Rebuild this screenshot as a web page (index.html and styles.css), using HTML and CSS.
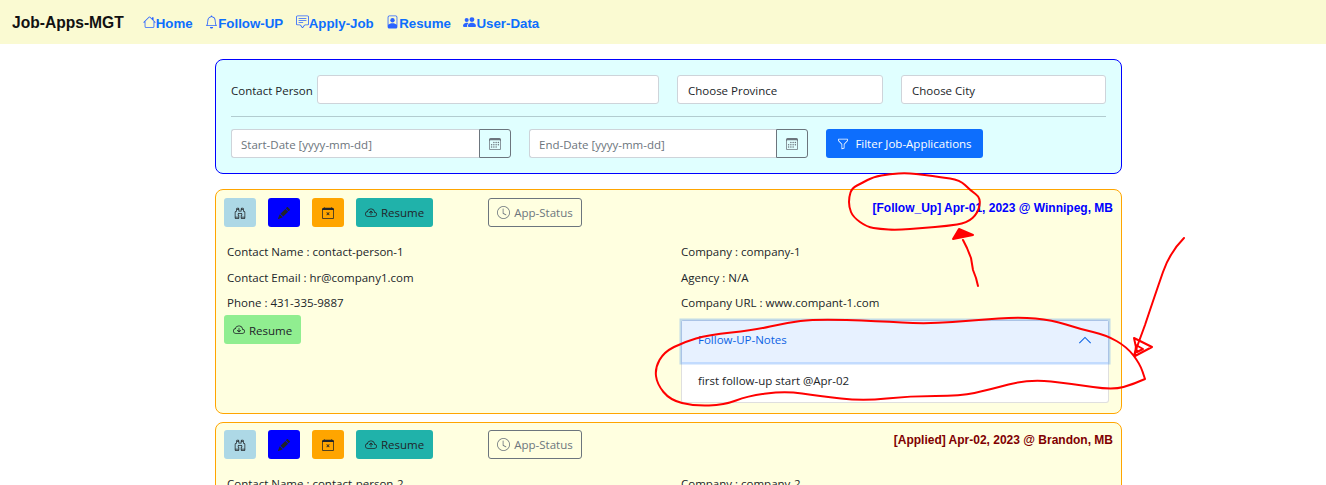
FILE: index.html
```html
<!DOCTYPE html>
<html lang="en">
<head>
  <meta charset="UTF-8">
  <title>Job-Apps-MGT</title>
  <meta name="viewport" content="width=device-width, initial-scale=1">
  <link rel="stylesheet" href="styles.css">
</head>
<body>
  <svg class="defs" width="0" height="0">
    <symbol id="i-house" viewBox="0 0 16 16"><path d="M8.707 1.5a1 1 0 0 0-1.414 0L.646 8.146a.5.5 0 0 0 .708.708L2 8.207V13.5A1.5 1.5 0 0 0 3.5 15h9a1.5 1.5 0 0 0 1.5-1.5V8.207l.646.647a.5.5 0 0 0 .708-.708L13 5.793V2.5a.5.5 0 0 0-.5-.5h-1a.5.5 0 0 0-.5.5v1.293L8.707 1.5ZM13 7.207V13.5a.5.5 0 0 1-.5.5h-9a.5.5 0 0 1-.5-.5V7.207l5-5 5 5Z"/></symbol>
    <symbol id="i-bell" viewBox="0 0 16 16"><path d="M8 16a2 2 0 0 0 2-2H6a2 2 0 0 0 2 2zM8 1.918l-.797.161A4.002 4.002 0 0 0 4 6c0 .628-.134 2.197-.459 3.742-.16.767-.376 1.566-.663 2.258h10.244c-.287-.692-.502-1.49-.663-2.258C12.134 8.197 12 6.628 12 6a4.002 4.002 0 0 0-3.203-3.92L8 1.917zM14.22 12c.223.447.481.801.78 1H1c.299-.199.557-.553.78-1C2.68 10.2 3 6.88 3 6c0-2.42 1.72-4.44 4.005-4.901a1 1 0 1 1 1.99 0A5.002 5.002 0 0 1 13 6c0 .88.32 4.2 1.22 6z"/></symbol>
    <symbol id="i-chat" viewBox="0 0 16 16"><path d="M14 1a1 1 0 0 1 1 1v8a1 1 0 0 1-1 1h-2.5a2 2 0 0 0-1.6.8L8 14.333 6.1 11.8a2 2 0 0 0-1.6-.8H2a1 1 0 0 1-1-1V2a1 1 0 0 1 1-1h12zM2 0a2 2 0 0 0-2 2v8a2 2 0 0 0 2 2h2.5a1 1 0 0 1 .8.4l1.9 2.533a1 1 0 0 0 1.6 0l1.9-2.533a1 1 0 0 1 .8-.4H14a2 2 0 0 0 2-2V2a2 2 0 0 0-2-2H2z"/><path d="M3 3.5a.5.5 0 0 1 .5-.5h9a.5.5 0 0 1 0 1h-9a.5.5 0 0 1-.5-.5zM3 6a.5.5 0 0 1 .5-.5h9a.5.5 0 0 1 0 1h-9A.5.5 0 0 1 3 6zm0 2.5a.5.5 0 0 1 .5-.5h5a.5.5 0 0 1 0 1h-5a.5.5 0 0 1-.5-.5z"/></symbol>
    <symbol id="i-person" viewBox="0 0 16 16"><path d="M4 0h8a2 2 0 0 1 2 2v12a2 2 0 0 1-2 2H4a2 2 0 0 1-2-2V2a2 2 0 0 1 2-2zm0 1a1 1 0 0 0-1 1v9.5c.8-1.3 2.6-2 5-2s4.2.7 5 2V2a1 1 0 0 0-1-1H4z"/><path d="M8 8.5a2.7 2.7 0 1 0 0-5.4 2.7 2.7 0 0 0 0 5.4z"/></symbol>
    <symbol id="i-people" viewBox="0 0 16 16"><path d="M7 14s-1 0-1-1 1-4 5-4 5 3 5 4-1 1-1 1H7Zm4-6a3 3 0 1 0 0-6 3 3 0 0 0 0 6Zm-5.784 6A2.238 2.238 0 0 1 5 13c0-1.355.68-2.75 1.936-3.72A6.325 6.325 0 0 0 5 9c-4 0-5 3-5 4s1 1 1 1h4.216ZM4.5 8a2.5 2.5 0 1 0 0-5 2.5 2.5 0 0 0 0 5Z"/></symbol>
    <symbol id="i-calendar3" viewBox="0 0 16 16"><path d="M14 0H2a2 2 0 0 0-2 2v12a2 2 0 0 0 2 2h12a2 2 0 0 0 2-2V2a2 2 0 0 0-2-2zM1 3.857C1 3.384 1.448 3 2 3h12c.552 0 1 .384 1 .857v10.286c0 .473-.448.857-1 .857H2c-.552 0-1-.384-1-.857V3.857z"/><path d="M6.5 7a1 1 0 1 0 0-2 1 1 0 0 0 0 2zm3 0a1 1 0 1 0 0-2 1 1 0 0 0 0 2zm3 0a1 1 0 1 0 0-2 1 1 0 0 0 0 2zm-9 3a1 1 0 1 0 0-2 1 1 0 0 0 0 2zm3 0a1 1 0 1 0 0-2 1 1 0 0 0 0 2zm3 0a1 1 0 1 0 0-2 1 1 0 0 0 0 2zm3 0a1 1 0 1 0 0-2 1 1 0 0 0 0 2zm-9 3a1 1 0 1 0 0-2 1 1 0 0 0 0 2zm3 0a1 1 0 1 0 0-2 1 1 0 0 0 0 2zm3 0a1 1 0 1 0 0-2 1 1 0 0 0 0 2z"/></symbol>
    <symbol id="i-funnel" viewBox="0 0 16 16"><path d="M1.5 1.5A.5.5 0 0 1 2 1h12a.5.5 0 0 1 .5.5v2a.5.5 0 0 1-.128.334L10 8.692V13.5a.5.5 0 0 1-.342.474l-3 1A.5.5 0 0 1 6 14.5V8.692L1.628 3.834A.5.5 0 0 1 1.5 3.5v-2zm1 .5v1.308l4.372 4.858A.5.5 0 0 1 7 8.5v5.306l2-.666V8.5a.5.5 0 0 1 .128-.334L13.5 3.308V2h-11z"/></symbol>
    <symbol id="i-binoculars" viewBox="0 0 16 16"><path d="M3 2.5A1.5 1.5 0 0 1 4.5 1h1A1.5 1.5 0 0 1 7 2.5V5h2V2.5A1.5 1.5 0 0 1 10.5 1h1A1.5 1.5 0 0 1 13 2.5v2.382a.5.5 0 0 0 .276.447l.895.447A1.5 1.5 0 0 1 15 7.118V14.5a1.5 1.5 0 0 1-1.5 1.5h-3A1.5 1.5 0 0 1 9 14.5v-3a.5.5 0 0 1 .146-.354l.854-.853V9.5a.5.5 0 0 0-.5-.5h-3a.5.5 0 0 0-.5.5v.793l.854.853A.5.5 0 0 1 7 11.5v3A1.5 1.5 0 0 1 5.5 16h-3A1.5 1.5 0 0 1 1 14.5V7.118a1.5 1.5 0 0 1 .83-1.342l.894-.447A.5.5 0 0 0 3 4.882V2.5zM4.5 2a.5.5 0 0 0-.5.5V3h2v-.5a.5.5 0 0 0-.5-.5h-1zM6 4H4v.882a1.5 1.5 0 0 1-.83 1.342l-.894.447A.5.5 0 0 0 2 7.118V13h4v-1.293l-.854-.853A.5.5 0 0 1 5 10.5v-1A1.5 1.5 0 0 1 6.5 8h3A1.5 1.5 0 0 1 11 9.5v1a.5.5 0 0 1-.146.354l-.854.853V13h4V7.118a.5.5 0 0 0-.276-.447l-.895-.447A1.5 1.5 0 0 1 12 4.882V4h-2v1.5a.5.5 0 0 1-.5.5h-3a.5.5 0 0 1-.5-.5V4zm4-1h2v-.5a.5.5 0 0 0-.5-.5h-1a.5.5 0 0 0-.5.5V3zm4 11h-4v.5a.5.5 0 0 0 .5.5h3a.5.5 0 0 0 .5-.5V14zm-8 0H2v.5a.5.5 0 0 0 .5.5h3a.5.5 0 0 0 .5-.5V14z"/></symbol>
    <symbol id="i-pencil" viewBox="0 0 16 16"><path d="M12.854.146a.5.5 0 0 0-.707 0L10.5 1.793 14.207 5.5l1.647-1.646a.5.5 0 0 0 0-.708l-3-3zm.646 6.061L9.793 2.5 3.293 9H3.5a.5.5 0 0 1 .5.5v.5h.5a.5.5 0 0 1 .5.5v.5h.5a.5.5 0 0 1 .5.5v.5h.5a.5.5 0 0 1 .5.5v.207l6.5-6.5zm-7.468 7.468A.5.5 0 0 1 6 13.5V13h-.5a.5.5 0 0 1-.5-.5V12h-.5a.5.5 0 0 1-.5-.5V11h-.5a.5.5 0 0 1-.5-.5V10h-.5a.499.499 0 0 1-.175-.032l-.179.178a.5.5 0 0 0-.11.168l-2 5a.5.5 0 0 0 .65.65l5-2a.5.5 0 0 0 .168-.11l.178-.178z"/></symbol>
    <symbol id="i-calendar-x" viewBox="0 0 16 16"><path d="M6.146 7.146a.5.5 0 0 1 .708 0L8 8.293l1.146-1.147a.5.5 0 1 1 .708.708L8.707 9l1.147 1.146a.5.5 0 0 1-.708.708L8 9.707l-1.146 1.147a.5.5 0 0 1-.708-.708L7.293 9 6.146 7.854a.5.5 0 0 1 0-.708z"/><path d="M3.5 0a.5.5 0 0 1 .5.5V1h8V.5a.5.5 0 0 1 1 0V1h1a2 2 0 0 1 2 2v11a2 2 0 0 1-2 2H2a2 2 0 0 1-2-2V3a2 2 0 0 1 2-2h1V.5a.5.5 0 0 1 .5-.5zM1 4v10a1 1 0 0 0 1 1h12a1 1 0 0 0 1-1V4H1z"/></symbol>
    <symbol id="i-cloud-up" viewBox="0 0 16 16"><path d="M7.646 5.146a.5.5 0 0 1 .708 0l2 2a.5.5 0 0 1-.708.708L8.5 6.707V10.5a.5.5 0 0 1-1 0V6.707L6.354 7.854a.5.5 0 1 1-.708-.708l2-2z"/><path d="M4.406 3.342A5.53 5.53 0 0 1 8 2c2.69 0 4.923 2 5.166 4.579C14.758 6.804 16 8.137 16 9.773 16 11.569 14.502 13 12.687 13H3.781C1.708 13 0 11.366 0 9.318c0-1.763 1.266-3.223 2.942-3.593.143-.863.698-1.723 1.464-2.383zm.653.757c-.757.653-1.153 1.44-1.153 2.056v.448l-.445.049C2.064 6.805 1 7.952 1 9.318 1 10.785 2.23 12 3.781 12h8.906C13.98 12 15 10.988 15 9.773c0-1.216-1.02-2.228-2.313-2.228h-.5v-.5C12.188 4.825 10.328 3 8 3a4.53 4.53 0 0 0-2.941 1.1z"/></symbol>
    <symbol id="i-cloud-down" viewBox="0 0 16 16"><path d="M7.646 10.854a.5.5 0 0 0 .708 0l2-2a.5.5 0 0 0-.708-.708L8.5 9.293V5.5a.5.5 0 0 0-1 0v3.793L6.354 8.146a.5.5 0 1 0-.708.708l2 2z"/><path d="M4.406 3.342A5.53 5.53 0 0 1 8 2c2.69 0 4.923 2 5.166 4.579C14.758 6.804 16 8.137 16 9.773 16 11.569 14.502 13 12.687 13H3.781C1.708 13 0 11.366 0 9.318c0-1.763 1.266-3.223 2.942-3.593.143-.863.698-1.723 1.464-2.383zm.653.757c-.757.653-1.153 1.44-1.153 2.056v.448l-.445.049C2.064 6.805 1 7.952 1 9.318 1 10.785 2.23 12 3.781 12h8.906C13.98 12 15 10.988 15 9.773c0-1.216-1.02-2.228-2.313-2.228h-.5v-.5C12.188 4.825 10.328 3 8 3a4.53 4.53 0 0 0-2.941 1.1z"/></symbol>
    <symbol id="i-clock" viewBox="0 0 16 16"><path d="M8 3.5a.5.5 0 0 0-1 0V9a.5.5 0 0 0 .252.434l3.5 2a.5.5 0 0 0 .496-.868L8 8.71V3.5z"/><path d="M8 16A8 8 0 1 0 8 0a8 8 0 0 0 0 16zm7-8A7 7 0 1 1 1 8a7 7 0 0 1 14 0z"/></symbol>
  </svg>

  <nav class="topbar">
    <a class="brand" href="#">Job-Apps-MGT</a>
    <a class="nav-link" href="#"><svg class="nav-icon"><use href="#i-house"/></svg>Home</a>
    <a class="nav-link" href="#"><svg class="nav-icon"><use href="#i-bell"/></svg>Follow-UP</a>
    <a class="nav-link" href="#"><svg class="nav-icon"><use href="#i-chat"/></svg>Apply-Job</a>
    <a class="nav-link" href="#"><svg class="nav-icon"><use href="#i-person"/></svg>Resume</a>
    <a class="nav-link" href="#"><svg class="nav-icon"><use href="#i-people"/></svg>User-Data</a>
  </nav>

  <main class="content">
    <section class="filter-panel">
      <div class="filter-row">
        <label class="filter-label" for="contact">Contact Person</label>
        <input class="field field-contact" id="contact" type="text">
        <div class="field field-province">Choose Province</div>
        <div class="field field-city">Choose City</div>
      </div>
      <hr class="filter-rule">
      <div class="filter-row date-row">
        <div class="date-group">
          <input class="field date-input" type="text" placeholder="Start-Date [yyyy-mm-dd]">
          <button class="date-btn"><svg class="icon"><use href="#i-calendar3"/></svg></button>
        </div>
        <div class="date-group">
          <input class="field date-input" type="text" placeholder="End-Date [yyyy-mm-dd]">
          <button class="date-btn"><svg class="icon"><use href="#i-calendar3"/></svg></button>
        </div>
        <button class="btn btn-filter"><svg class="icon"><use href="#i-funnel"/></svg>Filter Job-Applications</button>
      </div>
    </section>

    <article class="job-card">
      <div class="card-top">
        <button class="btn btn-square btn-view"><svg class="icon"><use href="#i-binoculars"/></svg></button>
        <button class="btn btn-square btn-edit"><svg class="icon"><use href="#i-pencil"/></svg></button>
        <button class="btn btn-square btn-close"><svg class="icon"><use href="#i-calendar-x"/></svg></button>
        <button class="btn btn-upload"><svg class="icon"><use href="#i-cloud-up"/></svg>Resume</button>
        <button class="btn btn-status"><svg class="icon icon-clock"><use href="#i-clock"/></svg>App-Status</button>
        <h2 class="card-title title-follow">[Follow_Up] Apr-01, 2023 @ Winnipeg, MB</h2>
      </div>
      <div class="card-body">
        <div class="card-col">
          <p class="line">Contact Name : contact-person-1</p>
          <p class="line">Contact Email : hr@company1.com</p>
          <p class="line">Phone : 431-335-9887</p>
          <button class="btn btn-download"><svg class="icon"><use href="#i-cloud-down"/></svg>Resume</button>
        </div>
        <div class="card-col col-right">
          <p class="line">Company : company-1</p>
          <p class="line">Agency : N/A</p>
          <p class="line">Company URL : www.compant-1.com</p>
          <div class="accordion">
            <div class="accordion-head">
              <span>Follow-UP-Notes</span>
              <svg class="chevron" viewBox="0 0 16 16"><path d="M1.5 11.5 8 5l6.5 6.5"/></svg>
            </div>
            <div class="accordion-body">first follow-up start @Apr-02</div>
          </div>
        </div>
      </div>
    </article>

    <article class="job-card">
      <div class="card-top">
        <button class="btn btn-square btn-view"><svg class="icon"><use href="#i-binoculars"/></svg></button>
        <button class="btn btn-square btn-edit"><svg class="icon"><use href="#i-pencil"/></svg></button>
        <button class="btn btn-square btn-close"><svg class="icon"><use href="#i-calendar-x"/></svg></button>
        <button class="btn btn-upload"><svg class="icon"><use href="#i-cloud-up"/></svg>Resume</button>
        <button class="btn btn-status"><svg class="icon icon-clock"><use href="#i-clock"/></svg>App-Status</button>
        <h2 class="card-title title-applied">[Applied] Apr-02, 2023 @ Brandon, MB</h2>
      </div>
      <div class="card-body">
        <div class="card-col">
          <p class="line">Contact Name : contact-person-2</p>
        </div>
        <div class="card-col col-right">
          <p class="line">Company : company-2</p>
        </div>
      </div>
    </article>
  </main>

  <!-- red pen marks drawn over the screenshot -->
  <svg class="scribble" viewBox="0 0 1326 485">
    <path d="M857 185.5Q862 183 867.5 180Q873 177 881.5 175.5Q890 174 898.5 173.5Q907 173 916 174Q925 175 932.5 176Q940 177 950 178.5Q960 180 965 185Q970 190 975.5 194Q981 198 979.5 205.5Q978 213 972.5 218Q967 223 957 224.5Q947 226 935 227Q923 228 910 229Q897 230 888.5 229.5Q880 229 873.5 228Q867 227 860 222Q853 217 851 212Q849 207 849 202Q849 197 850.5 192.5Q852 188 857 185.5Z"/>
    <path d="M978 286 976 278 973 270 971 258 967 248 963 240"/>
    <path class="head" d="M959 229 953 239 973 235Z"/>
    <path d="M1145 379L1142.5 371.5Q1140 364 1133.5 355.5Q1127 347 1116.5 341Q1106 335 1093 332Q1080 329 1066 324.5Q1052 320 1035.5 318.5Q1019 317 998.5 318.5Q978 320 952.5 322Q927 324 902 322.5Q877 321 846.5 320Q816 319 800.5 321Q785 323 770 326.5Q755 330 731.5 332.5Q708 335 696 338.5Q684 342 674 347Q664 352 659.5 360Q655 368 656 376Q657 384 663.5 392Q670 400 682 403Q694 406 709 405.5Q724 405 736 400.5Q748 396 766.5 393.5Q785 391 802 393.5Q819 396 841 398.5Q863 401 886.5 398.5Q910 396 935.5 396Q961 396 974.5 393Q988 390 1008.5 384.5Q1029 379 1051 381.5Q1073 384 1093 387Q1113 390 1123.5 387Q1134 384 1145 379"/>
    <path d="M1184 238Q1170 252 1163 272Q1155 295 1145 325L1134 355"/>
    <path d="M1134 338 1152 347 1135 356 1136 345 1143 349 1137 352 1134 338"/>
  </svg>
</body>
</html>
```

FILE: styles.css
```css
html, body {
  height: 100%;
  overflow: hidden;
}

body {
  margin: 0;
  position: relative;
  font-family: "Open Sans", "Noto Sans", sans-serif;
  font-size: 11.5px;
  color: #212529;
  background-color: #fff;
}

.defs {
  position: absolute;
}

.topbar {
  display: flex;
  align-items: center;
  box-sizing: border-box;
  height: 44px;
  padding: 2px 0 0 12px;
  background-color: #fafad2;
}

.brand {
  margin-right: 19px;
  font-family: "Liberation Sans", sans-serif;
  font-size: 15.6px;
  font-weight: bold;
  color: #111;
  text-decoration: none;
}

.nav-link {
  display: flex;
  align-items: center;
  margin-right: 12.5px;
  font-family: "Liberation Sans", sans-serif;
  font-size: 13.3px;
  font-weight: bold;
  color: #0d6efd;
  text-decoration: none;
}

.nav-icon {
  width: 13px;
  height: 14px;
  margin-top: -2px;
  fill: #2a63ff;
}

.content {
  width: 907px;
  margin-left: 215px;
  padding-top: 15px;
}

.filter-panel {
  box-sizing: border-box;
  height: 115px;
  padding: 15px 15px 0;
  background-color: #e0ffff;
  border: 1px solid #0000ff;
  border-radius: 8px;
}

.filter-row {
  display: flex;
  align-items: center;
  height: 29px;
}

.filter-label {
  width: 86px;
  flex: none;
  padding-top: 2px;
}

.field {
  box-sizing: border-box;
  height: 29px;
  padding: 1px 10px 0;
  font: inherit;
  line-height: 27px;
  color: #212529;
  background: #fff;
  border: 1px solid #ced4da;
  border-radius: 3px;
}

.field-contact {
  width: 342px;
}

.field-province {
  width: 206px;
  margin-left: 18px;
}

.field-city {
  width: 205px;
  margin-left: 18px;
}

.filter-rule {
  height: 1px;
  margin: 12px 0;
  background: #b2ccd0;
  border: 0;
}

.date-group {
  display: flex;
  width: 280px;
  margin-right: 18px;
}

.date-group + .date-group {
  width: 279px;
}

.date-input {
  flex: 1;
  min-width: 0;
  padding: 2px 0 0 9px;
  border-right: 0;
  border-radius: 3px 0 0 3px;
}

.date-input::placeholder {
  color: #6c757d;
}

.date-btn {
  width: 32px;
  height: 29px;
  padding: 0;
  background: transparent;
  border: 1px solid #6c757d;
  border-radius: 0 3px 3px 0;
}

.icon {
  display: block;
  width: 12px;
  height: 12px;
  flex: none;
  fill: currentColor;
}

.date-btn .icon {
  margin: 0 auto;
  fill: #6c757d;
}

.btn {
  box-sizing: border-box;
  display: inline-flex;
  align-items: center;
  justify-content: center;
  height: 29px;
  padding: 0 10px;
  font: inherit;
  white-space: nowrap;
  color: #212529;
  border: 0;
  border-radius: 3px;
}

.btn .icon {
  margin-right: 4px;
}

.btn-filter {
  width: 157px;
  color: #fff;
  background-color: #0d6efd;
}

.btn-filter .icon {
  margin-right: 6px;
}

.job-card {
  box-sizing: border-box;
  height: 225px;
  margin-top: 15px;
  padding: 8px 8px 0;
  background-color: #ffffe0;
  border: 1px solid orange;
  border-radius: 8px;
}

.job-card + .job-card {
  margin-top: 8px;
  padding-top: 7px;
}

.card-top {
  display: flex;
  align-items: flex-start;
}

.btn-square {
  width: 32px;
  margin-right: 12px;
  padding: 0;
}

.btn-square .icon {
  margin: 0;
}

.btn-view {
  background-color: lightblue;
}

.btn-edit {
  background-color: #0000ff;
}

.btn-close {
  background-color: orange;
}

.btn-upload {
  width: 77px;
  margin-right: 55px;
  padding: 0;
  background-color: lightseagreen;
}

.btn-status {
  width: 94px;
  padding: 0;
  color: #6c757d;
  background: transparent;
  border: 1px solid #6c757d;
}

.icon-clock {
  width: 13px;
  height: 13px;
}

.card-title {
  margin: 1px 0 0 auto;
  font-family: "Liberation Sans", sans-serif;
  font-size: 12px;
  font-weight: bold;
  line-height: 18px;
}

.title-follow {
  color: #0000ff;
}

.title-applied {
  color: #800000;
}

.card-body {
  display: grid;
  grid-template-columns: 445px 1fr;
  margin-top: 16px;
}

.line {
  height: 18px;
  margin: 0 0 7.5px;
  padding-left: 3px;
  line-height: 18px;
}

.btn-download {
  display: flex;
  width: 77px;
  margin-top: -4.5px;
  padding: 1px 0 0;
  background-color: lightgreen;
}

.col-right {
  padding-left: 12px;
}

.col-right .line {
  padding-left: 0;
}

.accordion {
  margin-right: 4px;
  background: #fff;
  border: 1px solid rgba(0, 0, 0, .125);
  border-radius: 3px;
}

.accordion-head {
  position: relative;
  display: flex;
  align-items: center;
  justify-content: space-between;
  box-sizing: border-box;
  height: 41px;
  padding: 0 16px 3px;
  color: #0c63e4;
  background-color: #e7f1ff;
  box-shadow: 0 0 0 2.5px rgba(13, 110, 253, .25);
}

.chevron {
  width: 14px;
  height: 14px;
  fill: none;
  stroke: #0c63e4;
  stroke-width: 1.2;
}

.accordion-body {
  box-sizing: border-box;
  height: 40.5px;
  padding: 0 16px 2px;
  line-height: 38.5px;
}

.scribble {
  position: absolute;
  top: 0;
  left: 0;
  width: 1326px;
  height: 485px;
  pointer-events: none;
  fill: none;
  stroke: #f00;
  stroke-width: 2;
  stroke-linejoin: round;
  stroke-linecap: round;
}

.scribble .head {
  fill: #f00;
}
```
